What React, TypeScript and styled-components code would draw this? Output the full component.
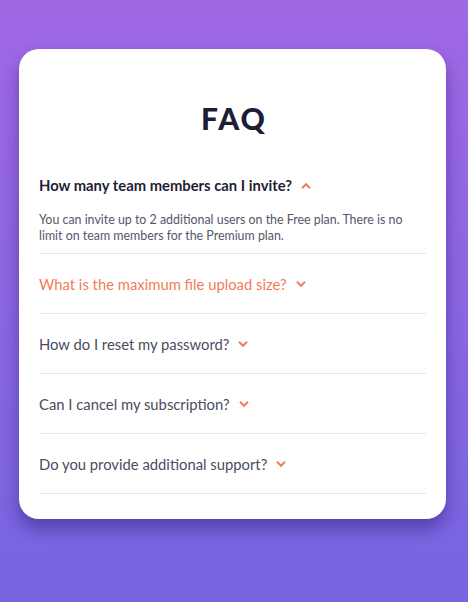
import React, { useState } from 'react';
import styled, { createGlobalStyle } from 'styled-components';

const GlobalStyle = createGlobalStyle`
  html, body {
    margin: 0;
    padding: 0;
  }
  body {
    font-family: Lato, "Noto Sans", sans-serif;
  }
`;

const Page = styled.div`
  min-height: 602px;
  box-sizing: border-box;
  padding-top: 49px;
  background: linear-gradient(180deg, #a168e4 0%, #7664e0 100%);
`;

const Card = styled.div`
  width: 427px;
  margin-left: 19px;
  box-sizing: border-box;
  padding: 52px 20px 25px;
  background: #fff;
  border-radius: 20px;
  box-shadow: 0 10px 16px rgba(40, 25, 110, 0.45);
`;

const Title = styled.h1`
  margin: 0 0 40px;
  padding-left: 3px;
  text-align: center;
  font-size: 30px;
  line-height: 34px;
  font-weight: 900;
  letter-spacing: 2px;
  color: #1d1e35;
`;

const Item = styled.div<{ $open: boolean }>`
  border-bottom: 1px solid #e8e8ea;
  padding: ${(p) => (p.$open ? '0 0 9px' : '20px 0 19px')};
`;

const Question = styled.button<{ $open: boolean; $hover: boolean }>`
  display: flex;
  align-items: center;
  gap: 9px;
  padding: 0;
  border: 0;
  background: none;
  cursor: pointer;
  font-family: inherit;
  font-size: 14.8px;
  line-height: 20px;
  font-weight: ${(p) => (p.$open ? 700 : 400)};
  color: ${(p) => (p.$open ? '#1e1f36' : p.$hover ? '#f47b57' : '#4b4c5f')};
`;

const Arrow = styled.svg<{ $open: boolean }>`
  transform: ${(p) => (p.$open ? 'rotate(180deg)' : 'none')};
`;

const Answer = styled.p`
  margin: 17px 0 0;
  font-size: 12.4px;
  line-height: 16px;
  color: #55566a;
`;

const faqs = [
  {
    q: 'How many team members can I invite?',
    a: 'You can invite up to 2 additional users on the Free plan. There is no limit on team members for the Premium plan.',
  },
  { q: 'What is the maximum file upload size?', a: 'No more than 2GB. All files in your account must fit your allotted storage space.' },
  { q: 'How do I reset my password?', a: 'Click “Forgot password” from the login page or “Change password” from your profile page.' },
  { q: 'Can I cancel my subscription?', a: 'Yes! Send us a message and we’ll process your request no questions asked.' },
  { q: 'Do you provide additional support?', a: 'Chat and email support is available 24/7. Phone lines are open during normal business hours.' },
];

export default function App() {
  const [open, setOpen] = useState(0);
  return (
    <>
      <GlobalStyle />
      <Page>
        <Card>
          <Title>FAQ</Title>
          {faqs.map((f, i) => (
            <Item key={f.q} $open={open === i}>
              <Question $open={open === i} $hover={i === 1} onClick={() => setOpen(open === i ? -1 : i)}>
                {f.q}
                <Arrow $open={open === i} width="10" height="7" viewBox="0 0 10 7">
                  <path fill="none" stroke="#F47B57" strokeWidth="2" d="M1 .799l4 4 4-4" />
                </Arrow>
              </Question>
              {open === i && <Answer>{f.a}</Answer>}
            </Item>
          ))}
        </Card>
      </Page>
    </>
  );
}
